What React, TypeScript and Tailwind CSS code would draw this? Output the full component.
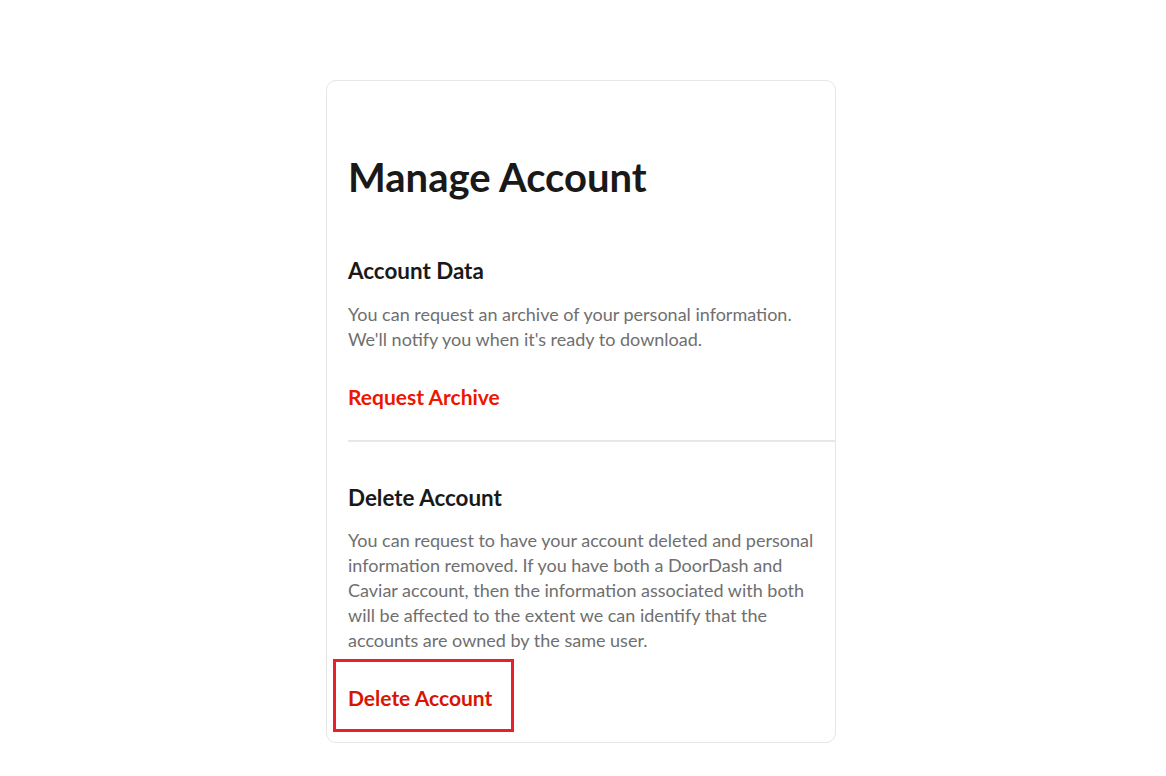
export default function App() {
  return (
    <div className="min-h-[776px] w-full bg-white font-['Lato',sans-serif]">
      <div className="flex justify-center pt-[80px]">
        <div className="ml-[-4px] w-[510px] rounded-[10px] border border-[#e6e6e6] pl-[21px] pt-[72px] pb-[10px]">
          <h1 className="text-[40px] font-bold leading-[48px] text-[#191919]">Manage Account</h1>

          <section className="mt-[56px]">
            <h2 className="text-[22.4px] font-bold leading-[28px] text-[#191919]">Account Data</h2>
            <p className="mt-[17px] text-[18px] leading-[25px] text-[#6f6f6f]">
              You can request an archive of your personal information.
              <br />
              We'll notify you when it's ready to download.
            </p>
            <button className="mt-[33px] block text-[21px] font-bold leading-[24px] text-[#eb1700]">
              Request Archive
            </button>
          </section>

          <div className="mt-[31px] h-[2px] bg-[#e7e7e7]" />

          <section className="mt-[42px]">
            <h2 className="text-[22.4px] font-bold leading-[28px] text-[#191919]">Delete Account</h2>
            <p className="mt-[16px] text-[18px] leading-[25px] text-[#6f6f6f]">
              You can request to have your account deleted and personal
              <br />
              information removed. If you have both a DoorDash and
              <br />
              Caviar account, then the information associated with both
              <br />
              will be affected to the extent we can identify that the
              <br />
              accounts are owned by the same user.
            </p>
            <div className="ml-[-15px] mt-[6px] w-[181px] border-[3px] border-[#e8202a] pl-[12px] pt-[24px] pb-[19px]">
              <button className="block text-[21px] font-bold leading-[24px] text-[#d91400]">
                Delete Account
              </button>
            </div>
          </section>
        </div>
      </div>
    </div>
  );
}
